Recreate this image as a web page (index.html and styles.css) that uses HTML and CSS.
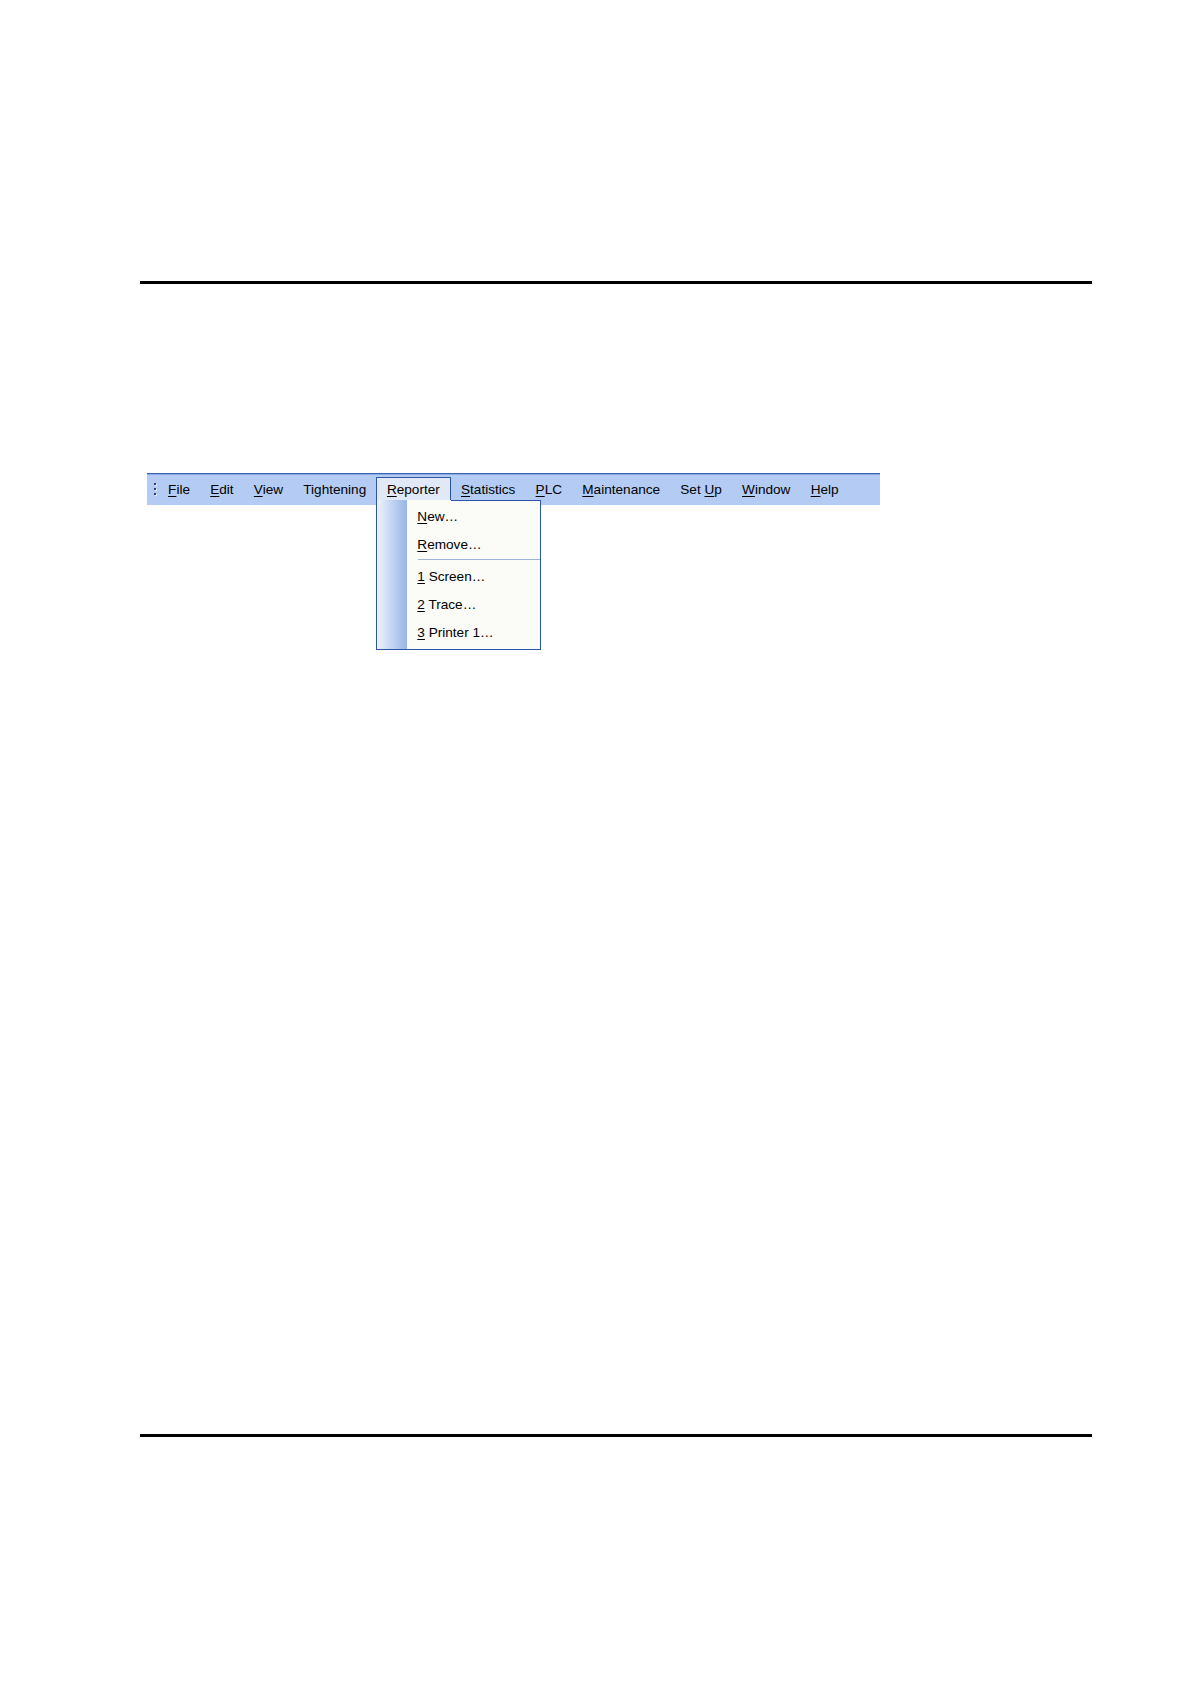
FILE: index.html
```html
<!DOCTYPE html>
<html>
<head>
<meta charset="utf-8">
<link rel="stylesheet" href="styles.css">
</head>
<body>
<div class="page">
  <div class="rule rule-top"></div>
  <div class="menubar">
    <div class="gripper">
      <svg width="4" height="14" viewBox="0 0 4 14">
        <rect x="1" y="2" width="2" height="2" fill="#ffffff" opacity="0.7"/>
        <rect x="0" y="1" width="2" height="2" fill="#27417a"/>
        <rect x="1" y="7" width="2" height="2" fill="#ffffff" opacity="0.7"/>
        <rect x="0" y="6" width="2" height="2" fill="#27417a"/>
        <rect x="1" y="12" width="2" height="2" fill="#ffffff" opacity="0.7"/>
        <rect x="0" y="11" width="2" height="2" fill="#27417a"/>
      </svg>
    </div>
    <span class="item"><u>F</u>ile</span>
    <span class="item"><u>E</u>dit</span>
    <span class="item"><u>V</u>iew</span>
    <span class="item">Tightening</span>
    <span class="item open"><u>R</u>eporter
      <div class="dropdown">
        <div class="strip"></div>
        <div class="entries">
          <div class="entry"><u>N</u>ew…</div>
          <div class="entry"><u>R</u>emove…</div>
          <div class="sep"></div>
          <div class="entry"><u>1</u> Screen…</div>
          <div class="entry"><u>2</u> Trace…</div>
          <div class="entry"><u>3</u> Printer 1…</div>
        </div>
      </div>
    </span>
    <span class="item"><u>S</u>tatistics</span>
    <span class="item"><u>P</u>LC</span>
    <span class="item"><u>M</u>aintenance</span>
    <span class="item">Set <u>U</u>p</span>
    <span class="item"><u>W</u>indow</span>
    <span class="item"><u>H</u>elp</span>
  </div>
  <div class="rule rule-bottom"></div>
</div>
</body>
</html>
```

FILE: styles.css
```css
html, body {
  margin: 0;
  padding: 0;
  background: #ffffff;
}

.page {
  padding-left: 140px;
  width: 952px;
  font-family: "Liberation Sans", Arial, sans-serif;
  font-size: 13.6px;
  color: #000;
}

.rule {
  height: 3px;
  background: #000;
}

.rule-top {
  margin-top: 281px;
}

.rule-bottom {
  margin-top: 929px;
}

.menubar {
  margin-top: 189px;
  margin-left: 7px;
  width: 733px;
  height: 31px;
  display: flex;
  align-items: stretch;
  background: #b4ccf4;
  border-top: 1px solid #3a62b3;
  box-shadow: inset 0 1px 0 #8aa9e4;
}

.gripper {
  display: flex;
  align-items: center;
  padding-left: 7px;
  width: 4px;
  padding-bottom: 2px;
}

.gripper svg {
  display: block;
}

.item {
  padding: 0 10.1px;
  line-height: 31px;
  white-space: nowrap;
}

.item u {
  text-underline-offset: 2px;
}

.item.open {
  position: relative;
  margin-top: 3px;
  line-height: 23px;
  padding: 0 10.1px 0 9.6px;
  border: 1px solid #2a55a8;
  border-bottom: none;
  background: #e1e9f6;
  z-index: 2;
}

.dropdown {
  position: absolute;
  left: -1px;
  top: 22px;
  width: 163px;
  height: 149px;
  display: flex;
  background: #fbfbf8;
  border: 1px solid #2a55a8;
  border-top: none;
  line-height: 28px;
}

.dropdown::before {
  content: "";
  position: absolute;
  top: 0;
  left: 74px;
  right: 0;
  height: 1px;
  background: #2a55a8;
}

.strip {
  width: 30px;
  background: linear-gradient(to right, #eef3fc 0%, #c6d7f3 45%, #98b5e5 100%);
}

.entries {
  flex: 1;
  padding-top: 3px;
  padding-left: 10px;
}

.entry {
  height: 28px;
  white-space: nowrap;
}

.entry u {
  text-underline-offset: 2px;
}

.sep {
  height: 4px;
  position: relative;
}

.sep::after {
  content: "";
  position: absolute;
  left: 1px;
  right: 0;
  top: 0;
  height: 1px;
  background: #9fb3d8;
}
```
